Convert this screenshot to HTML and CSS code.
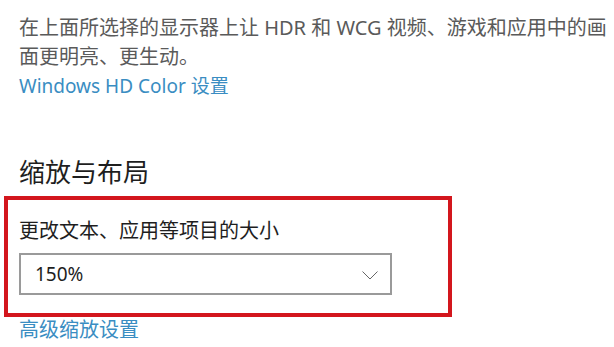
FILE: index.html
```html
<!DOCTYPE html>
<html lang="zh-CN">
<head>
<meta charset="utf-8">
<title>显示设置</title>
<link rel="stylesheet" href="styles.css">
</head>
<body>
<main class="page">
  <p class="desc">在上面所选择的显示器上让 HDR 和 WCG 视频、游戏和应用中的画面更明亮、更生动。</p>
  <a class="link link-hd" href="#">Windows HD Color 设置</a>
  <h2 class="heading">缩放与布局</h2>
  <section class="group">
    <div class="label">更改文本、应用等项目的大小</div>
    <div class="select">
      <span class="value">150%</span>
      <svg class="chevron" width="16" height="9" viewBox="0 0 16 9"><polyline points="0.5,0.5 8,8 15.5,0.5" fill="none" stroke="#666" stroke-width="1"/></svg>
    </div>
  </section>
  <a class="link link-after" href="#">高级缩放设置</a>
</main>
</body>
</html>
```
FILE: styles.css
```css
html, body {
  margin: 0;
  padding: 0;
  background: #ffffff;
}
body {
  font-family: "Noto Sans", "Noto Sans CJK SC", sans-serif;
  overflow: hidden;
}
.page {
  display: flex;
  flex-direction: column;
  align-items: flex-start;
  padding: 13px 0 0 19px;
}
.desc {
  margin: 0;
  width: 592px;
  font-size: 20px;
  line-height: 29px;
  color: #5a5a5a;
}
.link {
  display: block;
  font-size: 20px;
  line-height: 29px;
  color: #3a8dc2;
  text-decoration: none;
}
.link-hd {
  font-size: 19px;
  margin-top: 1px;
}
.heading {
  margin: 53px 0 0 0;
  font-size: 26px;
  line-height: 36px;
  font-weight: normal;
  color: #1e1e1e;
}
.group {
  position: relative;
  margin-top: 10px;
  padding: 16px 0 18px 0;
}
.group::before {
  content: "";
  position: absolute;
  top: -4px;
  bottom: -4px;
  left: -15px;
  width: 448px;
  box-sizing: border-box;
  border: 4px solid #d3161d;
  pointer-events: none;
}
.label {
  font-size: 20px;
  line-height: 29px;
  color: #1e1e1e;
}
.select {
  margin-top: 8px;
  width: 373px;
  height: 42px;
  box-sizing: border-box;
  border: 2px solid #9a9a9a;
  display: flex;
  align-items: center;
  justify-content: space-between;
  padding: 0 12px 0 14px;
}
.value {
  font-size: 19px;
  color: #1e1e1e;
}
.chevron {
  display: block;
  margin-top: 2px;
}
.link-after {
  margin-top: 2px;
}
```
